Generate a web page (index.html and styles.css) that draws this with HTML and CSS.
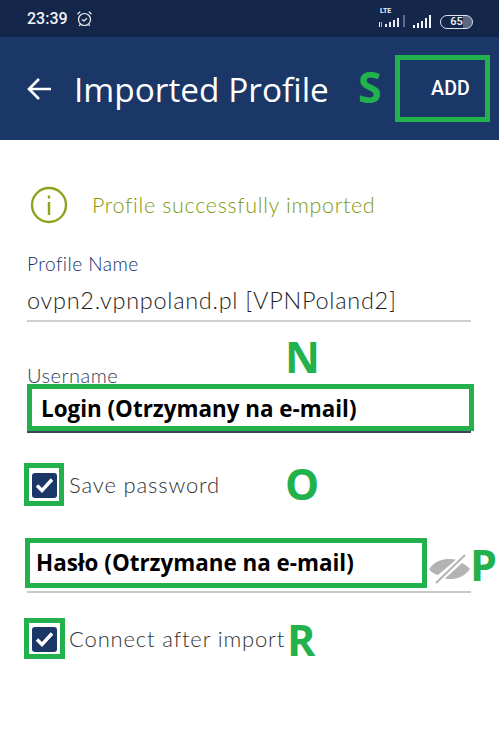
FILE: index.html
```html
<!DOCTYPE html>
<html lang="pl">
<head>
  <meta charset="UTF-8" />
  <meta name="viewport" content="width=device-width, initial-scale=1" />
  <title>Imported Profile</title>
  <link rel="stylesheet" href="styles.css">
</head>
<body>
  <div class="screen">
    <!-- status bar -->
    <div class="statusbar">
      <span class="time">23:39</span>
      <svg class="alarm" width="17" height="17" viewBox="0 0 17 17" fill="none" stroke="#f2f4f8" stroke-width="1.2">
        <circle cx="8.5" cy="9.5" r="6"/>
        <path d="M6 9.500l2 1.500 3-2.700M1.500 4.200L4.200 1.600M15.500 4.200L12.800 1.600M4.400 14.400l-1.200 1.500M12.600 14.400l1.200 1.500"/>
      </svg>
      <div class="status-right">
        <div class="lte">
          <span class="lte-label">LTE</span>
          <svg width="27" height="14" viewBox="0 0 27 14" fill="#e8ebf2">
            <rect x="0" y="7" width="1" height="5"/><rect x="2" y="7" width="1" height="5" opacity=".7"/>
            <rect x="6" y="9" width="2" height="3"/><rect x="10" y="7" width="2" height="5"/><rect x="14" y="5" width="2" height="7"/><rect x="18" y="3" width="2" height="9"/>
            <rect x="24" y="0" width="2" height="12" opacity=".35"/>
          </svg>
        </div>
        <svg class="signal" width="20" height="14" viewBox="0 0 20 14" fill="#f2f4f8">
          <rect x="0" y="10" width="2" height="3"/><rect x="4" y="8" width="2" height="5"/><rect x="8" y="6" width="2" height="7"/><rect x="12" y="3" width="2" height="10"/><rect x="16" y="0" width="2" height="13"/>
        </svg>
        <div class="battery">65</div>
      </div>
    </div>

    <!-- app bar -->
    <header class="appbar">
      <svg class="back" width="26" height="24" viewBox="0 0 26 24" fill="none" stroke="#fff" stroke-width="2.6">
        <path d="M25 12H3M13 2L3 12l10 10"/>
      </svg>
      <h1>Imported Profile</h1>
      <button class="add">ADD</button>
    </header>

    <main class="content">
      <div class="message">
        <svg width="38" height="38" viewBox="0 0 38 38" fill="none" stroke="#8ba31f" stroke-width="2.4">
          <circle cx="19" cy="19" r="17"/>
          <path d="M19 16v13M19 9.500v3"/>
        </svg>
        <span>Profile successfully imported</span>
      </div>

      <div class="field">
        <label>Profile Name</label>
        <div class="value">ovpn2.vpnpoland.pl [VPNPoland2]</div>
      </div>

      <div class="field field-user">
        <label>Username</label>
      </div>

      <div class="check check-save">
        <span class="box"><svg width="19" height="16" viewBox="0 0 19 16" fill="none" stroke="#fff" stroke-width="3.4"><path d="M2 8.500l5 5L17 2.500"/></svg></span>
        Save password
      </div>

      <div class="field field-pass">
        <svg class="eye" width="42" height="30" viewBox="0 0 42 30" fill="#b3b3b3">
          <path d="M0 15C6 7 13 5 21 5c2 0 4 .2 6 .7L9 21C5 20 2 18 0 15zM41 15c-6 8-13 10-20 10-2 0-3.500-.2-5-.6L33 9c3 1.500 6 3.500 8 6z"/>
          <path d="M6 29L36 1" stroke="#fff" stroke-width="5"/>
          <path d="M7 29L36 1" stroke="#b3b3b3" stroke-width="2"/>
        </svg>
      </div>

      <div class="check check-connect">
        <span class="box"><svg width="19" height="16" viewBox="0 0 19 16" fill="none" stroke="#fff" stroke-width="3.4"><path d="M2 8.500l5 5L17 2.500"/></svg></span>
        Connect after import
      </div>
    </main>

    <!-- annotations drawn on top of the screenshot -->
    <div class="mark mark-add"></div>
    <div class="mark mark-login">Login (Otrzymany na e-mail)</div>
    <div class="mark mark-haslo">Hasło (Otrzymane na e-mail)</div>
    <div class="mark mark-check1"></div>
    <div class="mark mark-check2"></div>
    <span class="letter letter-s">S</span>
    <span class="letter letter-n">N</span>
    <span class="letter letter-o">O</span>
    <span class="letter letter-p">P</span>
    <span class="letter letter-r">R</span>
  </div>
</body>
</html>
```

FILE: styles.css
```css
* {
  box-sizing: border-box;
}
html, body {
  margin: 0;
  padding: 0;
  background: #fff;
}
.screen {
  position: relative;
  width: 499px;
  height: 743px;
  overflow: hidden;
  font-family: 'Lato', 'Open Sans', sans-serif;
}

/* status bar */
.statusbar {
  height: 37px;
  background: #14274a;
  display: flex;
  align-items: center;
  padding: 0 26px 0 27px;
  color: #f2f4f8;
}
.time {
  font-family: 'Roboto', sans-serif;
  font-size: 16px;
  font-weight: 500;
  margin-right: 8px;
}
.status-right {
  margin-left: auto;
  display: flex;
  align-items: flex-end;
  gap: 7px;
}
.lte {
  position: relative;
  width: 27px;
  height: 20px;
  display: flex;
  align-items: flex-end;
}
.lte-label {
  position: absolute;
  left: 1px;
  top: -2px;
  font-family: 'Roboto', sans-serif;
  font-size: 7px;
  font-weight: 700;
}
.battery {
  width: 33px;
  height: 14px;
  border: 1.5px solid #dfe3ea;
  border-radius: 7px;
  font-family: 'Roboto', sans-serif;
  font-size: 11px;
  font-weight: 500;
  line-height: 11px;
  text-align: center;
  background: linear-gradient(to right, transparent 70%, #5a6880 70%);
}

/* app bar */
.appbar {
  height: 103px;
  background: #1a3768;
  display: flex;
  align-items: center;
  padding: 0 9px 0 26px;
}
.appbar h1 {
  margin: 0 0 0 22px;
  font-family: 'Open Sans', sans-serif;
  font-size: 33.400px;
  font-weight: 400;
  color: #fff;
  white-space: nowrap;
}
.add {
  margin-left: auto;
  width: 95px;
  height: 67px;
  border: none;
  background: none;
  padding: 0 0 0 16px;
  font-family: 'Roboto', sans-serif;
  font-size: 19.500px;
  font-weight: 500;
  letter-spacing: .2px;
  color: #fff;
}

/* form */
.content {
  padding: 46px 28px 0 27px;
}
.message {
  display: flex;
  align-items: center;
  gap: 24px;
  padding-left: 3px;
  height: 38px;
  font-size: 21.500px;
  letter-spacing: .67px;
  font-weight: 300;
  color: #7f9a10;
}
.field {
  position: relative;
  margin-top: 28px;
  border-bottom: 2px solid #cfcfcf;
}
.field label {
  display: block;
  font-size: 19px;
  letter-spacing: .5px;
  line-height: 24px;
  font-weight: 300;
  color: #14306a;
}
.value {
  font-size: 23.500px;
  letter-spacing: .7px;
  line-height: 48px;
  height: 44px;
  font-weight: 300;
  color: #1f1f1f;
}
.field-user {
  margin-top: 41px;
  height: 70px;
  border-bottom-color: #3b4560;
}
.field-user label {
  color: #2f3b58;
  font-size: 20px;
}
.field-pass {
  margin-top: 30px;
  height: 65px;
  border-bottom-color: #c8c8c8;
}
.eye {
  position: absolute;
  right: 0;
  bottom: 7px;
}
.check {
  display: flex;
  align-items: center;
  gap: 12px;
  height: 26px;
  padding-left: 5px;
  font-size: 22px;
  letter-spacing: .85px;
  line-height: 24px;
  font-weight: 300;
  color: #333;
}
.check-save {
  margin-top: 39px;
}
.check-connect {
  margin-top: 33px;
}
.box {
  width: 25px;
  height: 25px;
  background: #1a3768;
  border-radius: 3px;
  display: flex;
  align-items: center;
  justify-content: center;
  flex-shrink: 0;
}

/* annotations */
.mark {
  position: absolute;
  border: 5px solid #22b14c;
  font-family: 'Open Sans', sans-serif;
  font-size: 22.400px;
  font-weight: 700;
  color: #000;
  white-space: nowrap;
}
.mark-add {
  left: 395px;
  top: 55px;
  width: 95px;
  height: 67px;
}
.mark-login {
  left: 27px;
  top: 384px;
  width: 447px;
  height: 47px;
  padding-left: 9px;
  line-height: 40px;
}
.mark-haslo {
  left: 25px;
  top: 538px;
  width: 402px;
  height: 50px;
  padding-left: 6px;
  line-height: 40px;
}
.mark-check1 {
  left: 24px;
  top: 463px;
  width: 40px;
  height: 43px;
}
.mark-check2 {
  left: 24px;
  top: 618px;
  width: 41px;
  height: 41px;
}
.letter {
  position: absolute;
  font-family: 'Open Sans', sans-serif;
  font-size: 43px;
  font-weight: 700;
  line-height: 44px;
  color: #22b14c;
}
.letter-s { left: 358px; top: 65px; }
.letter-n { left: 285px; top: 335px; }
.letter-o { left: 285px; top: 462px; }
.letter-p { left: 470px; top: 543px; }
.letter-r { left: 287px; top: 618px; }
```
